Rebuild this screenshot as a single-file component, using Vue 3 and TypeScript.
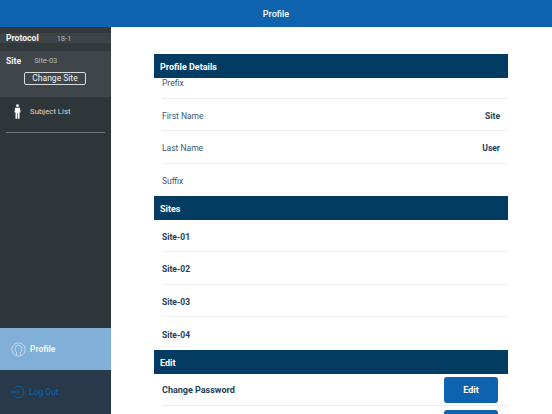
<script setup lang="ts">
const details = [
  { label: 'Prefix', value: '' },
  { label: 'First Name', value: 'Site' },
  { label: 'Last Name', value: 'User' },
  { label: 'Suffix', value: '' },
]
const sites = ['Site-01', 'Site-02', 'Site-03', 'Site-04']
</script>

<template>
  <div class="app">
    <header class="topbar">Profile</header>
    <div class="body">
      <aside class="side">
        <div class="protocol">
          <div class="protocol-strip">
            <span class="side-key">Protocol</span>
            <span class="side-val proto-val">18-1</span>
          </div>
        </div>
        <div class="site">
          <div class="site-line">
            <span class="side-key">Site</span>
            <span class="side-val site-val">Site-03</span>
          </div>
          <button class="change">Change Site</button>
        </div>
        <div class="subject">
          <svg class="person" width="7" height="15" viewBox="0 0 8 18">
            <circle cx="4" cy="2" r="1.7" fill="#fff" />
            <path d="M1 4.6h6l.6 5.6H6.4V17.6H4.4V11.5H3.6V17.6H1.6V10.2H.4z" fill="#fff" />
          </svg>
          <span>Subject List</span>
        </div>
        <div class="rule"></div>
        <div class="spacer"></div>
        <div class="nav-profile">
          <svg class="nav-icon" width="15" height="15" viewBox="0 0 15 15" fill="none" stroke="#d5e5f2" stroke-width="0.8">
            <circle cx="7.5" cy="7.5" r="6.6" />
            <path d="M5.6 13.6V10.6C4.6 9.4 4.2 8 4.2 6.6 4.2 4.6 5.6 3.2 7.5 3.2S10.8 4.6 10.8 6.6C10.8 8 10.4 9.4 9.4 10.6V13.6" />
          </svg>
          <span>Profile</span>
        </div>
        <div class="nav-logout">
          <svg class="nav-icon" width="14" height="14" viewBox="0 0 14 14" fill="none" stroke="#0f63ae" stroke-width="0.9">
            <path d="M2.6 3.4A5.8 5.8 0 1 1 2.6 10.6" />
            <path d="M.4 7H8.4" />
            <circle cx="1" cy="7" r="0.8" fill="#0f63ae" />
          </svg>
          <span>Log Out</span>
        </div>
      </aside>
      <main class="main">
        <div class="sec-head">Profile Details</div>
        <div
          v-for="(d, i) in details"
          :key="d.label"
          class="row detail"
          :class="{ first: i === 0, last: i === details.length - 1 }"
        >
          <span>{{ d.label }}</span>
          <span class="val">{{ d.value }}</span>
        </div>
        <div class="sec-head">Sites</div>
        <div v-for="(s, i) in sites" :key="s" class="row site-row" :class="{ last: i === sites.length - 1 }">
          {{ s }}
        </div>
        <div class="sec-head">Edit</div>
        <div class="row site-row action">
          <span>Change Password</span>
          <button class="edit">Edit</button>
        </div>
        <div class="row site-row action">
          <span></span>
          <button class="edit"></button>
        </div>
      </main>
    </div>
  </div>
</template>

<style>
html, body { margin: 0; padding: 0; overflow: hidden; background: #fff; }
</style>

<style scoped>
.app {
  width: 552px;
  height: 414px;
  display: flex;
  flex-direction: column;
  overflow: hidden;
  font-family: Roboto, "Liberation Sans", sans-serif;
}
.topbar {
  height: 27px;
  flex: none;
  background: #0f63ae;
  color: #fff;
  font-size: 9px;
  font-weight: 500;
  display: flex;
  align-items: center;
  justify-content: center;
}
.body { flex: 1; display: flex; min-height: 0; }
.side {
  width: 111px;
  flex: none;
  background: #2f3639;
  display: flex;
  flex-direction: column;
  color: #e8eaeb;
}
.protocol { height: 24px; flex: none; background: #32383b; padding-top: 6px; box-sizing: border-box; }
.protocol-strip {
  height: 10px;
  background: #3d4346;
  display: flex;
  align-items: center;
  padding-left: 6px;
}
.side-key { font-size: 8.6px; font-weight: 700; color: #f2f3f4; }
.side-val { font-size: 7.5px; color: #b4b9bc; }
.proto-val { margin-left: 18px; }
.site-val { margin-left: 13px; }
.site {
  height: 46px;
  flex: none;
  background: #3f4549;
  box-sizing: border-box;
  padding: 5px 6px 0;
  display: flex;
  flex-direction: column;
}
.site-line { display: flex; align-items: center; height: 9px; }
.change {
  align-self: flex-start;
  margin: 7px 0 0 18px;
  width: 62px;
  height: 13px;
  padding: 0;
  border: 1px solid #d8dbdd;
  border-radius: 2px;
  background: transparent;
  color: #f0f1f2;
  font-family: inherit;
  font-size: 8.5px;
  line-height: 1;
}
.subject {
  height: 27px;
  flex: none;
  margin-top: 1px;
  display: flex;
  align-items: center;
  padding-left: 14px;
  font-size: 7.8px;
  color: #d5d8da;
}
.person { margin-right: 9px; }
.rule { height: 1px; flex: none; margin: 7px 6px 0; background: #71777a; }
.spacer { flex: 1; }
.nav-profile {
  height: 42px;
  flex: none;
  background: #80b0d8;
  display: flex;
  align-items: center;
  padding-left: 11px;
  color: #f1f6fa;
  font-size: 8.5px;
  font-weight: 700;
}
.nav-logout {
  height: 44px;
  flex: none;
  background: #27394b;
  display: flex;
  align-items: center;
  padding-left: 11px;
  color: #0f63ae;
  font-size: 8.5px;
}
.nav-icon { margin-right: 4px; }
.main {
  flex: 1;
  box-sizing: border-box;
  padding: 27px 44px 0 43px;
  overflow: hidden;
  background: #fff;
}
.sec-head {
  height: 24px;
  box-sizing: border-box;
  padding: 2px 0 0 6px;
  background: #033c63;
  color: #fff;
  font-size: 9px;
  font-weight: 700;
  display: flex;
  align-items: center;
}
.row {
  height: 32.33px;
  box-sizing: border-box;
  margin-left: 8px;
  padding-right: 8px;
  padding-top: 2px;
  border-bottom: 1px solid #eceef0;
  display: flex;
  align-items: center;
  justify-content: space-between;
  color: #3a5674;
  font-size: 8.5px;
}
.row.first { height: 21px; align-items: flex-start; padding-top: 0; }
.row.last { border-bottom: none; }
.val { font-weight: 700; color: #1c3d5c; }
.site-row { height: 32.5px; font-weight: 700; font-size: 8.5px; color: #1c3d5c; }
.row.action { margin-right: 0; padding-right: 0; padding-top: 1px; font-size: 9px; }
.edit {
  width: 54px;
  height: 26px;
  margin-right: 10px;
  flex: none;
  padding: 0;
  border: none;
  border-radius: 3px;
  background: #0f63ae;
  color: #fff;
  font-family: inherit;
  font-size: 9px;
  font-weight: 700;
}
</style>
